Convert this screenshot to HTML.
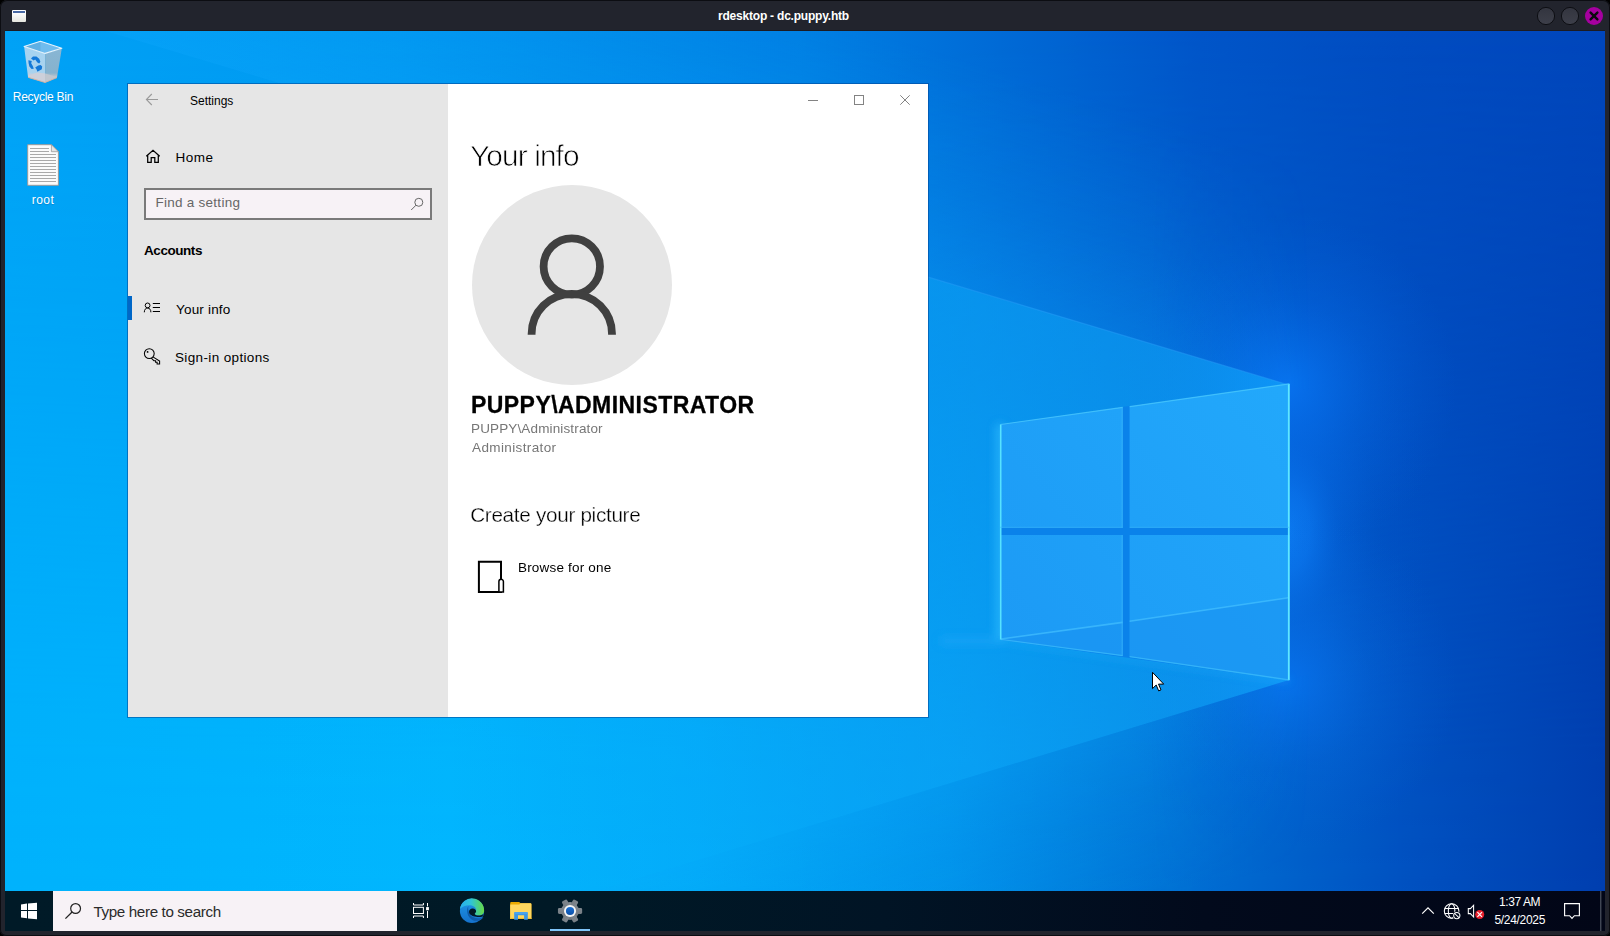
<!DOCTYPE html>
<html>
<head>
<meta charset="utf-8">
<title>rdesktop - dc.puppy.htb</title>
<style>
*{box-sizing:border-box;margin:0;padding:0}
html,body{width:1610px;height:936px;overflow:hidden;background:#000}
body{font-family:"Liberation Sans",sans-serif;position:relative}
.abs{position:absolute}
.t{position:absolute;white-space:nowrap;line-height:1;transform-origin:0 0}
#frame{left:0;top:0;width:1610px;height:936px;background:#22242d;border-radius:7px 7px 6px 6px;overflow:hidden}
#frame:after{content:"";position:absolute;left:0;top:0;right:0;bottom:0;border-radius:7px 7px 6px 6px;box-shadow:inset 0 0 0 1px #0c0d12;pointer-events:none}
#desk{left:5px;top:31px;width:1600px;height:900px;overflow:hidden;background:#0078d7}
#taskbar{left:0;top:860px;width:1600px;height:40px;background:linear-gradient(90deg,#001a27 0%,#001926 35%,#011425 55%,#020a1c 75%,#020617 100%)}
#tsearch{left:48px;top:0;width:344px;height:40px;background:#f7f2f6}
#win{left:123px;top:53px;width:800px;height:633px;background:#fff;box-shadow:0 0 0 1px rgba(0,70,150,.55)}
#side{left:0;top:0;width:320px;height:633px;background:#e6e6e6}
#sbox{left:16px;top:104px;width:288px;height:32px;border:2px solid #7a7a7a;background:#f7f2f6}
#sel{left:0;top:212px;width:4px;height:24px;background:#0067c8}
#avatar{left:344px;top:101px;width:200px;height:200px;border-radius:50%;background:#e6e6e6}
</style>
</head>
<body>
<div id="frame" class="abs">
<div class="abs" style="left:5px;top:30px;width:1600px;height:1px;background:#1c1b22"></div>
<!-- outer titlebar -->
<div class="abs" style="left:12px;top:10px;width:14px;height:12px;background:linear-gradient(#fff 0,#fdfdfd 25%,#e6e6df 100%);border-radius:1px"></div>
<div class="abs" style="left:13px;top:11px;width:12px;height:1.5px;background:#4a6aa5"></div>
<div class="t" id="ttl" style="left:718.00px;top:9.74px;font-size:12px;font-weight:bold;color:#fff;letter-spacing:-0.21px">rdesktop - dc.puppy.htb</div>
<svg class="abs" style="left:1530px;top:4px" width="76" height="24" viewBox="1530 4 76 24">
 <defs><linearGradient id="bg1" x1="0" y1="0" x2="0" y2="1"><stop offset="0" stop-color="#33353f"/><stop offset="1" stop-color="#3d3f4a"/></linearGradient></defs>
 <circle cx="1546" cy="16" r="8.6" fill="url(#bg1)" stroke="#0d0e13" stroke-width="1"/>
 <circle cx="1570" cy="16" r="8.6" fill="url(#bg1)" stroke="#0d0e13" stroke-width="1"/>
 <circle cx="1594" cy="16" r="9" fill="#a5009f"/>
 <path d="M1590.6 12.6 L1597.4 19.4 M1597.4 12.6 L1590.6 19.4" stroke="#0a0a10" stroke-width="2.4" stroke-linecap="round"/>
</svg>

<!-- desktop -->
<div id="desk" class="abs">
<svg class="abs" style="left:0;top:0" width="1600" height="900" viewBox="5 31 1600 900">
<defs>
 <linearGradient id="wtop" x1="5" y1="0" x2="1605" y2="0" gradientUnits="userSpaceOnUse"><stop offset="0.0000" stop-color="#00a2f6"/><stop offset="0.2469" stop-color="#0097f0"/><stop offset="0.4969" stop-color="#0080e4"/><stop offset="0.6219" stop-color="#006ad6"/><stop offset="0.7469" stop-color="#0055c9"/><stop offset="0.8719" stop-color="#004cc1"/><stop offset="1.0000" stop-color="#0046bc"/></linearGradient>
 <linearGradient id="wbot" x1="5" y1="0" x2="1605" y2="0" gradientUnits="userSpaceOnUse"><stop offset="0.0000" stop-color="#00b2fc"/><stop offset="0.2781" stop-color="#00b7fe"/><stop offset="0.4344" stop-color="#00a9f7"/><stop offset="0.5906" stop-color="#0092ea"/><stop offset="0.6844" stop-color="#007cdb"/><stop offset="0.7781" stop-color="#0067ce"/><stop offset="0.8719" stop-color="#0052c1"/><stop offset="1.0000" stop-color="#003eae"/></linearGradient>
 <linearGradient id="wmaskg" x1="0" y1="31" x2="0" y2="931" gradientUnits="userSpaceOnUse">
  <stop offset="0" stop-color="#000"/><stop offset=".35" stop-color="#505050"/><stop offset=".8" stop-color="#ececec"/><stop offset="1" stop-color="#fff"/>
 </linearGradient>
 <mask id="wmask" maskUnits="userSpaceOnUse" x="5" y="31" width="1600" height="900"><rect x="5" y="31" width="1600" height="900" fill="url(#wmaskg)"/></mask>
 <linearGradient id="wbeam" x1="1289" y1="0" x2="250" y2="0" gradientUnits="userSpaceOnUse">
  <stop offset="0" stop-color="#12b0ff" stop-opacity=".58"/><stop offset=".3" stop-color="#10b2ff" stop-opacity=".5"/><stop offset=".6" stop-color="#0cb4ff" stop-opacity=".32"/><stop offset="1" stop-color="#08b6ff" stop-opacity="0"/>
 </linearGradient>
 <linearGradient id="wbeam2" x1="1289" y1="0" x2="500" y2="0" gradientUnits="userSpaceOnUse">
  <stop offset="0" stop-color="#0a80ec" stop-opacity=".55"/><stop offset="1" stop-color="#0a90f0" stop-opacity="0"/>
 </linearGradient>
 <radialGradient id="wglow" cx="1289" cy="532" r="1" gradientUnits="userSpaceOnUse" gradientTransform="translate(1287 532) scale(150 270) translate(-1289 -532)">
  <stop offset="0" stop-color="#0c7cf2" stop-opacity="1"/><stop offset=".15" stop-color="#0a76ee" stop-opacity=".85"/><stop offset=".34" stop-color="#0668e2" stop-opacity=".42"/><stop offset=".6" stop-color="#045cd4" stop-opacity=".14"/><stop offset="1" stop-color="#0050c8" stop-opacity="0"/>
 </radialGradient>
 <radialGradient id="wglc" cx="1287" cy="682" r="170" gradientUnits="userSpaceOnUse"><stop offset="0" stop-color="#0874f0" stop-opacity=".85"/><stop offset=".5" stop-color="#086ce2" stop-opacity=".3"/><stop offset="1" stop-color="#0660d8" stop-opacity="0"/></radialGradient>
 <radialGradient id="wglc2" cx="1287" cy="384" r="170" gradientUnits="userSpaceOnUse"><stop offset="0" stop-color="#0874f2" stop-opacity=".9"/><stop offset=".5" stop-color="#066ae6" stop-opacity=".36"/><stop offset="1" stop-color="#0660d8" stop-opacity="0"/></radialGradient>
 <linearGradient id="mfadeg" x1="1150" y1="0" x2="1310" y2="0" gradientUnits="userSpaceOnUse"><stop offset="0" stop-color="#fff"/><stop offset=".55" stop-color="#777"/><stop offset="1" stop-color="#000"/></linearGradient>
 <mask id="mfade" maskUnits="userSpaceOnUse" x="5" y="31" width="1600" height="900"><rect x="5" y="31" width="1600" height="900" fill="url(#mfadeg)"/></mask>
 <linearGradient id="wlow" x1="1289" y1="680" x2="1341.5" y2="852.2" gradientUnits="userSpaceOnUse"><stop offset="0" stop-color="#10b2ff" stop-opacity=".26"/><stop offset=".4" stop-color="#10b2ff" stop-opacity=".12"/><stop offset="1" stop-color="#10b2ff" stop-opacity="0"/></linearGradient>
 <linearGradient id="wupp" x1="1289" y1="385" x2="1352" y2="174.2" gradientUnits="userSpaceOnUse"><stop offset="0" stop-color="#10a8ff" stop-opacity=".27"/><stop offset=".4" stop-color="#10a8ff" stop-opacity=".13"/><stop offset="1" stop-color="#10a8ff" stop-opacity="0"/></linearGradient>
 <linearGradient id="pane" x1="1000" y1="650" x2="1289" y2="400" gradientUnits="userSpaceOnUse">
  <stop offset="0" stop-color="#1c9af5"/><stop offset="1" stop-color="#22a8fb"/>
 </linearGradient>
 <filter id="bl6" x="-50%" y="-50%" width="200%" height="200%"><feGaussianBlur stdDeviation="5"/></filter>
 <filter id="bl20" x="-10%" y="-30%" width="120%" height="160%"><feGaussianBlur stdDeviation="18"/></filter>
 <clipPath id="above"><polygon points="1289,385 5,1 5,-400 1605,-400 1605,385"/></clipPath>
 <clipPath id="below"><polygon points="1289,680 465,931 1605,931 1605,680"/></clipPath>
</defs>
<rect x="5" y="31" width="1600" height="900" fill="url(#wtop)"/>
<rect x="5" y="31" width="1600" height="900" fill="url(#wbot)" mask="url(#wmask)"/>
<rect x="5" y="31" width="1600" height="900" fill="url(#wglow)"/>
<circle cx="1287" cy="682" r="170" fill="url(#wglc)"/>
<circle cx="1287" cy="384" r="170" fill="url(#wglc2)"/>
<polygon points="1605,583.7 465,931 1605,931" fill="url(#wlow)" mask="url(#mfade)"/>
<polygon points="105.4,31 1605,31 1605,479.5" fill="url(#wupp)" mask="url(#mfade)"/>
<polygon points="1289,385 5,1 5,931 465,931 1289,680" fill="url(#wbeam)"/>
<path d="M1289 385 L600 179" stroke="#2aa0fa" stroke-width="1.2" opacity=".45"/>
<!-- logo -->
<g filter="url(#bl6)" opacity=".8">
 <path d="M1000 424 V640" stroke="#35c0ff" stroke-width="7"/>
 <path d="M1000 640 L1289 680" stroke="#30b4ff" stroke-width="4" opacity=".6"/>
 <path d="M940 641 H1000" stroke="#22a8fa" stroke-width="5"/>
</g>
<polygon points="1000,424.3 1289.5,383.6 1289.5,680.4 1000,639.7" fill="#0a82ea"/>

<g>
 <polygon points="1000,424.3 1122.7,407.2 1122.7,527.8 1000,527.8" fill="url(#pane)"/>
 <polygon points="1129.6,406.5 1289.5,383.6 1289.5,527.8 1129.6,527.8" fill="url(#pane)"/>
 <polygon points="1000,535 1122.7,535 1122.7,656 1000,639.7" fill="url(#pane)"/>
 <polygon points="1129.6,535 1289.5,535 1289.5,680.4 1129.6,657.1" fill="url(#pane)"/>
 <polygon points="1000,639.4 1122.7,622.6 1122.7,656 1000,639.7" fill="#1890f0" opacity=".5"/>
 <path d="M1001 639 L1122.7 622.4" stroke="#44c0ff" stroke-width="1.6" opacity=".7"/>
 <polygon points="1129.6,621.4 1289.5,598 1289.5,680.4 1129.6,657.1" fill="#1890f0" opacity=".5"/>
 <path d="M1129.6 621.2 L1288.5 597.8" stroke="#44c0ff" stroke-width="1.6" opacity=".7"/>
 <path d="M1000.7 424.5 V639.5" stroke="#56e2ff" stroke-width="1.6" fill="none"/>
 <path d="M1288.8 384 V680" stroke="#5fe6ff" stroke-width="1.8" fill="none"/>
 <path d="M1000.5 424.5 L1122.7 407.4 M1129.6 406.7 L1289.3 383.9" stroke="#48c8fd" stroke-width="1.2" fill="none" opacity=".8"/>
 <path d="M1000.5 639.3 L1122.7 655.6 M1129.6 656.7 L1289.3 680" stroke="#4ccfff" stroke-width="1.3" fill="none" opacity=".5"/>
 <path d="M1122.2 407.4 V527.8 M1122.2 535 V655.6" stroke="#3cb8fb" stroke-width="1" fill="none" opacity=".7"/>
 <path d="M1000 527.3 H1122.7 M1129.6 527.3 H1289.5" stroke="#3cb8fb" stroke-width="1" fill="none" opacity=".6"/>
</g>
</svg>
<svg class="abs" style="left:0;top:0" width="100" height="200" viewBox="5 31 100 200">
 <defs>
  <linearGradient id="rb1" x1="0" y1="0" x2="0" y2="1"><stop offset="0" stop-color="#a6d3f1"/><stop offset=".72" stop-color="#a9d2ee"/><stop offset=".8" stop-color="#c6cfdc"/><stop offset="1" stop-color="#cdd0d8"/></linearGradient>
  <linearGradient id="rb2" x1="0" y1="0" x2="0" y2="1"><stop offset="0" stop-color="#88b6d4"/><stop offset=".72" stop-color="#87b2cd"/><stop offset=".82" stop-color="#b9c2cc"/><stop offset="1" stop-color="#c2c6cc"/></linearGradient>
 </defs>
 <!-- recycle bin -->
 <polygon points="24.1,46.6 45.1,53.5 45.1,82.5 28.1,77.4" fill="url(#rb1)"/>
 <polygon points="45.1,53.5 61.8,48.4 57,77.6 45.1,82.5" fill="url(#rb2)"/>
 <polygon points="24.1,46.5 40.5,41.2 40.5,52 " fill="#5eade2"/>
 <polygon points="24.1,46.5 40.5,41.2 61.8,48.3 45.1,53.4" fill="#6fbcee"/>
 <polygon points="24.1,46.5 40.5,41.2 40.5,51.9" fill="#5fb0e4"/>
 <path d="M24.1 46.5 L40.5 41.2 L61.8 48.3 L45.1 53.4 Z" fill="none" stroke="#e6f2fb" stroke-width="1.1" stroke-linejoin="round"/>
 <polygon points="28.2,75.6 37.2,72.4 45.1,73.5 45.1,82.4 28.3,77.3" fill="#cdd0da"/>
 <polygon points="45.1,73.5 56.9,76.9 57,77.6 45.1,82.4" fill="#c0c6ce"/>
 <path d="M28.3 77.4 L45.1 82.5 L57 77.6" fill="none" stroke="#d2b09e" stroke-width=".9"/>
 <g fill="#1378d8">
  <path d="M31 58.6 L33 56.4 L36.4 56.6 L39.2 58.8 L40.4 61.8 L39.2 63.6 L37.4 62.6 L35.2 59.6 L33.6 60.6 Z"/>
  <path d="M28.4 60.2 L31.8 61 L31.2 63.2 L32.8 66 L33.8 68.8 L31.6 69 L29.4 66.4 L28.6 63.2 Z"/>
  <path d="M35.2 67.4 L38.2 65.4 L40.6 65 L42.2 66.6 L41.8 69.2 L39.6 70.6 L37.4 71.8 L36.6 69.6 Z"/>
 </g>
 <!-- document -->
 <path d="M27.7 144.7 H51.4 L58.4 151.7 V185.3 H27.7 Z" fill="#fbfbfb" stroke="#9a9a9a" stroke-width="1"/>
 <path d="M51.4 144.7 V151.7 H58.4 Z" fill="#e4e4e4" stroke="#9a9a9a" stroke-width=".8"/>
 <g stroke="#a9a9a9" stroke-width="1">
  <path d="M30 148.5 H49 M30 151.5 H49 M30 154.5 H56 M30 157.5 H56 M30 160.5 H56 M30 163.5 H56 M30 166.5 H56 M30 169.5 H56 M30 172.5 H56 M30 175.5 H56 M30 178.5 H56 M30 181.5 H56"/>
 </g>
</svg>
<div class="t" id="t_recycle" style="left:7.80px;top:60.45px;font-size:12px;color:#fff;text-shadow:0 1px 1px rgba(0,40,90,.22);letter-spacing:-0.28px">Recycle Bin</div>
<div class="t" id="t_root" style="left:26.80px;top:163.00px;font-size:12px;color:#fff;text-shadow:0 1px 1px rgba(0,40,90,.22);letter-spacing:0.43px">root</div>
<div id="win" class="abs">
 <div id="side" class="abs"></div>
 <!-- titlebar -->
 <svg class="abs" style="left:0;top:0" width="800" height="40" viewBox="128 84 800 40">
  <path d="M158 99.5 H146.6 M151.8 94 L146.4 99.5 L151.8 105" stroke="#9a9a9a" stroke-width="1.1" fill="none"/>
  <path d="M808 100.5 H818" stroke="#838383" stroke-width="1"/>
  <rect x="854.5" y="95.5" width="9" height="9" fill="none" stroke="#838383" stroke-width="1"/>
  <path d="M900.3 95.3 L909.7 104.7 M909.7 95.3 L900.3 104.7" stroke="#838383" stroke-width="1"/>
 </svg>
 <div class="t" id="t_settings" style="left:62.00px;top:10.54px;font-size:12px;color:#000">Settings</div>
 <!-- home -->
 <svg class="abs" style="left:16px;top:64px" width="20" height="18" viewBox="144 148 20 18">
  <path d="M146.3 156.3 L153 150.4 L159.7 156.3 M147.7 155.2 V162.4 H151.2 V157.6 H154.8 V162.4 H158.3 V155.2" stroke="#000" stroke-width="1.25" fill="none" stroke-linejoin="miter"/>
 </svg>
 <div class="t" id="t_home" style="left:47.40px;top:66.70px;font-size:13.5px;color:#000;letter-spacing:0.53px">Home</div>
 <div id="sbox" class="abs"></div>
 <div class="t" id="t_find" style="left:27.40px;top:112.00px;font-size:13.5px;color:#666;letter-spacing:0.27px">Find a setting</div>
 <svg class="abs" style="left:280px;top:112px" width="18" height="16" viewBox="408 196 18 16">
  <circle cx="418.8" cy="202.3" r="4" fill="none" stroke="#666" stroke-width="1"/>
  <path d="M416 205.2 L411.2 210" stroke="#666" stroke-width="1"/>
 </svg>
 <div class="t" id="t_accounts" style="left:16.00px;top:160.00px;font-size:13.5px;font-weight:bold;color:#000;letter-spacing:-0.44px">Accounts</div>
 <div id="sel" class="abs"></div>
 <!-- your info icon -->
 <svg class="abs" style="left:14px;top:216px" width="22" height="16" viewBox="142 300 22 16">
  <circle cx="147.6" cy="305.4" r="2.4" fill="none" stroke="#000" stroke-width="1"/>
  <path d="M144.3 312.3 C144.3 309.6 145.6 308.1 147.6 308.1 C149.6 308.1 150.9 309.6 150.9 312.3" fill="none" stroke="#000" stroke-width="1"/>
  <path d="M152.8 303.5 H160 M152.8 307.5 H160 M152.8 311.5 H160" stroke="#000" stroke-width="1"/>
 </svg>
 <div class="t" id="t_yourinfo" style="left:48.00px;top:218.90px;font-size:13.5px;color:#000;letter-spacing:0.19px">Your info</div>
 <!-- key icon -->
 <svg class="abs" style="left:14px;top:262px" width="22" height="20" viewBox="142 346 22 20">
  <circle cx="149.3" cy="353.6" r="4.9" fill="none" stroke="#000" stroke-width="1.05"/>
  <circle cx="147.6" cy="351.9" r="0.9" fill="#000"/>
  <path d="M152.9 356.9 L159.6 361 V364 H157.1 V362.3 H155.6 V360.7 H153.9 L151.3 358.2" fill="none" stroke="#000" stroke-width="1.05"/>
 </svg>
 <div class="t" id="t_signin" style="left:47.00px;top:266.67px;font-size:13.5px;color:#000;letter-spacing:0.36px">Sign-in options</div>
 <!-- content -->
 <div class="t" id="t_head" style="left:342.10px;top:56.60px;font-size:29.8px;color:#000;letter-spacing:-0.88px;-webkit-text-stroke:0.75px #fff">Your info</div>
 <div id="avatar" class="abs"></div>
 <svg class="abs" style="left:384px;top:141px" width="120" height="120" viewBox="512 225 120 120">
  <circle cx="571.8" cy="266.5" r="28.2" fill="none" stroke="#404040" stroke-width="7.8"/>
  <path d="M531.6 334.8 V334 A40.2 40.2 0 0 1 612 334 V334.8" fill="none" stroke="#404040" stroke-width="7.8"/>
 </svg>
 <div class="t" id="t_name" style="left:343.00px;top:309.80px;font-size:23px;font-weight:bold;color:#000;letter-spacing:0.44px;-webkit-text-stroke:0.3px #000">PUPPY\ADMINISTRATOR</div>
 <div class="t" id="t_sub1" style="left:343.00px;top:338.30px;font-size:13.5px;color:#767676;letter-spacing:0.14px">PUPPY\Administrator</div>
 <div class="t" id="t_sub2" style="left:344.00px;top:357.30px;font-size:13.5px;color:#767676;letter-spacing:0.38px">Administrator</div>
 <div class="t" id="t_create" style="left:342.20px;top:421.19px;font-size:20.7px;color:#000;letter-spacing:-0.30px;-webkit-text-stroke:0.3px #fff">Create your picture</div>
 <svg class="abs" style="left:346px;top:472px" width="34" height="40" viewBox="474 556 34 40">
  <path d="M478.9 561.7 H501 V591.9 H478.9 Z" fill="none" stroke="#000" stroke-width="2"/>
  <path d="M498.9 591.9 V581.6 A2.25 2.25 0 0 1 503.4 581.6 V591.9 Z" fill="#fff" stroke="#000" stroke-width="1.5"/>
 </svg>
 <div class="t" id="t_browse" style="left:390.00px;top:477.30px;font-size:13.5px;color:#000;letter-spacing:0.18px">Browse for one</div>
</div>
<div id="taskbar" class="abs">
 <div id="tsearch" class="abs"></div>
 <svg class="abs" style="left:0;top:0" width="1600" height="40" viewBox="5 891 1600 40">
  <!-- start logo -->
  <g fill="#fff">
   <polygon points="21,904.4 27,903.6 27,910 21,910"/>
   <polygon points="28,903.5 37,902.7 37,910 28,910"/>
   <polygon points="21,911 27,911 27,918.3 21,917.5"/>
   <polygon points="28,911 37,911 37,919.2 28,918.4"/>
  </g>
  <!-- search icon -->
  <circle cx="75.6" cy="908.5" r="4.9" fill="none" stroke="#222" stroke-width="1.2"/>
  <path d="M72.1 912 L65.4 918.6" stroke="#222" stroke-width="1.3"/>
  <!-- task view -->
  <g fill="none" stroke="#fff" stroke-width="1">
   <rect x="413.5" y="907.3" width="9.9" height="6.2"/>
   <path d="M413.5 903 V905 H423.4 V903 M413.5 918 V916 H423.4 V918"/>
   <path d="M427.5 903 V906.4 M427.5 910.9 V918"/>
  </g>
  <rect x="426.1" y="907.1" width="2.8" height="3.1" fill="#fff"/>
  <!-- edge -->
  <defs>
   <linearGradient id="eg1" x1="460" y1="0" x2="484" y2="0" gradientUnits="userSpaceOnUse"><stop offset="0" stop-color="#29aeeb"/><stop offset=".45" stop-color="#2fc4d8"/><stop offset=".8" stop-color="#4fd27a"/><stop offset="1" stop-color="#6ada44"/></linearGradient>
   <linearGradient id="eg2" x1="0" y1="905" x2="0" y2="923" gradientUnits="userSpaceOnUse"><stop offset="0" stop-color="#1c8ee0"/><stop offset="1" stop-color="#1471cc"/></linearGradient>
   <linearGradient id="eg3" x1="468" y1="0" x2="483" y2="0" gradientUnits="userSpaceOnUse"><stop offset="0" stop-color="#0d5aa8"/><stop offset="1" stop-color="#125fb2"/></linearGradient>
   <linearGradient id="gg1" x1="0" y1="-12" x2="0" y2="12" gradientUnits="userSpaceOnUse"><stop offset="0" stop-color="#8c949b"/><stop offset="1" stop-color="#697077"/></linearGradient>
   <linearGradient id="gg2" x1="0" y1="-4" x2="0" y2="4" gradientUnits="userSpaceOnUse"><stop offset="0" stop-color="#1b6fd2"/><stop offset="1" stop-color="#0b50a8"/></linearGradient>
  </defs>
  <g>
   <circle cx="472" cy="910.9" r="12.1" fill="url(#eg2)"/>
   <path d="M468.4 906 C466 909.6 466.6 917.2 473.2 920.4 C477.4 922.2 481.6 920.2 483.4 917 C480.2 918.8 476 918.7 473 917.1 C469 914.9 467.6 910 468.4 906 Z" fill="url(#eg3)"/>
   <path d="M460 908.9 A12.1 12.1 0 0 1 484.1 910.4 C484.2 913.6 481.6 915.7 478.3 915.5 C476 915.4 474.3 914.4 474.6 913.3 C475.7 912.4 476.3 911 476.1 909.6 C475.7 907 472.7 905.2 469.4 905.2 C465.6 905.2 462 906.9 460 908.9 Z" fill="url(#eg1)"/>
   <path d="M469 911.7 C469 909.5 470.9 908.2 472.8 908.4 C474.8 908.6 476.3 910 476.1 911.6 C475.9 912.8 474.7 913.4 474.7 914 C474.8 914.9 476.4 915.5 478.3 915.5 C480.2 915.5 481.9 915 483.2 914.2 L482.6 916.4 C480.6 917 478.2 917.2 476.2 916.8 C472.2 916.1 469 914.6 469 911.7 Z" fill="#021824"/>
  </g>
  <!-- folder -->
  <g>
   <path d="M510.2 903 Q510.2 902 511.2 902 H518.8 Q519.5 902 519.9 902.6 L520.4 903.2 H530.4 Q531.4 903.2 531.4 904.2 V918.9 H510.2 Z" fill="#e9a900"/>
   <path d="M510.2 904.6 H519.4 L520.4 903.2 H530.4 Q531.4 903.2 531.4 904.2 V918.9 H510.2 Z" fill="#ffd75f"/>
   <rect x="510.2" y="917.9" width="21.2" height="1" fill="#f2bb2e"/>
   <path d="M514.2 919.8 V913.4 Q514.2 912.1 515.5 912.1 H526.5 Q527.8 912.1 527.8 913.4 V919.8 H524.1 V915.2 H518 V919.8 Z" fill="#3d97e5"/>
   <path d="M514.2 913.4 Q514.2 912.1 515.5 912.1 H526.5 Q527.8 912.1 527.8 913.4 V914 H514.2 Z" fill="#4aa3ee"/>
  </g>
  <!-- gear -->
  <g transform="translate(570.05 911)">
   <g fill="url(#gg1)">
    <circle r="8.9"/>
    <rect x="-12.1" y="-2.9" width="24.2" height="5.8" rx="1.3"/>
    <rect x="-12.1" y="-2.9" width="24.2" height="5.8" rx="1.3" transform="rotate(60)"/>
    <rect x="-12.1" y="-2.9" width="24.2" height="5.8" rx="1.3" transform="rotate(120)"/>
   </g>
   <circle r="6.05" fill="#f4f5f6"/>
   <circle r="4.1" fill="url(#gg2)"/>
  </g>
  <rect x="550" y="929" width="40" height="2" fill="#80c6fa"/>
  <!-- tray -->
  <path d="M1422.2 913.7 L1428 907.8 L1433.8 913.7" fill="none" stroke="#fff" stroke-width="1.2"/>
  <g fill="none" stroke="#fff" stroke-width="1.05">
   <circle cx="1451.6" cy="911" r="7.3"/>
   <ellipse cx="1451.6" cy="911" rx="3.3" ry="7.3"/>
   <path d="M1444.7 908.5 H1458.5 M1444.7 913.5 H1458.5"/>
  </g>
  <circle cx="1456.8" cy="915.6" r="4.3" fill="#020a1c"/>
  <circle cx="1456.8" cy="915.6" r="3.1" fill="none" stroke="#fff" stroke-width="1.05"/>
  <path d="M1454.7 913.5 L1458.9 917.7" stroke="#fff" stroke-width="1.05"/>
  <path d="M1468.3 908.6 H1470.4 L1473.6 905.2 V917 L1470.4 913.6 H1468.3 Z" fill="none" stroke="#fff" stroke-width="1.05" stroke-linejoin="miter"/>
  <circle cx="1479.7" cy="914.5" r="4.5" fill="#e81f2c"/>
  <path d="M1477.4 912.2 L1482 916.8 M1482 912.2 L1477.4 916.8" stroke="#fff" stroke-width="1.15"/>
  <path d="M1564.6 903.6 H1579.4 V915.7 H1574.4 L1572 918.3 L1569.6 915.7 H1564.6 Z" fill="none" stroke="#fff" stroke-width="1.15"/>
  <rect x="1600.3" y="891" width="1" height="40" fill="#5c6370"/>
 </svg>
 <div class="t" id="t_type" style="left:88.50px;top:12.83px;font-size:15.2px;color:#2b2b2b;letter-spacing:-0.37px">Type here to search</div>
 <div class="t" id="t_time" style="left:1494.00px;top:4.80px;font-size:12px;color:#fff;letter-spacing:-0.43px">1:37 AM</div>
 <div class="t" id="t_date" style="left:1489.50px;top:22.84px;font-size:12px;color:#fff;letter-spacing:-0.32px">5/24/2025</div>
</div>
<svg class="abs" style="left:1146px;top:640px" width="16" height="24" viewBox="1151 671 16 24">
 <path d="M1152.5 672.3 V688.6 L1156.2 685 L1158.7 690.9 L1161 689.9 L1158.5 684.1 H1163.7 Z" fill="#fff" stroke="#000" stroke-width="1" stroke-linejoin="miter"/>
</svg>
</div>
</div>
</body>
</html>
